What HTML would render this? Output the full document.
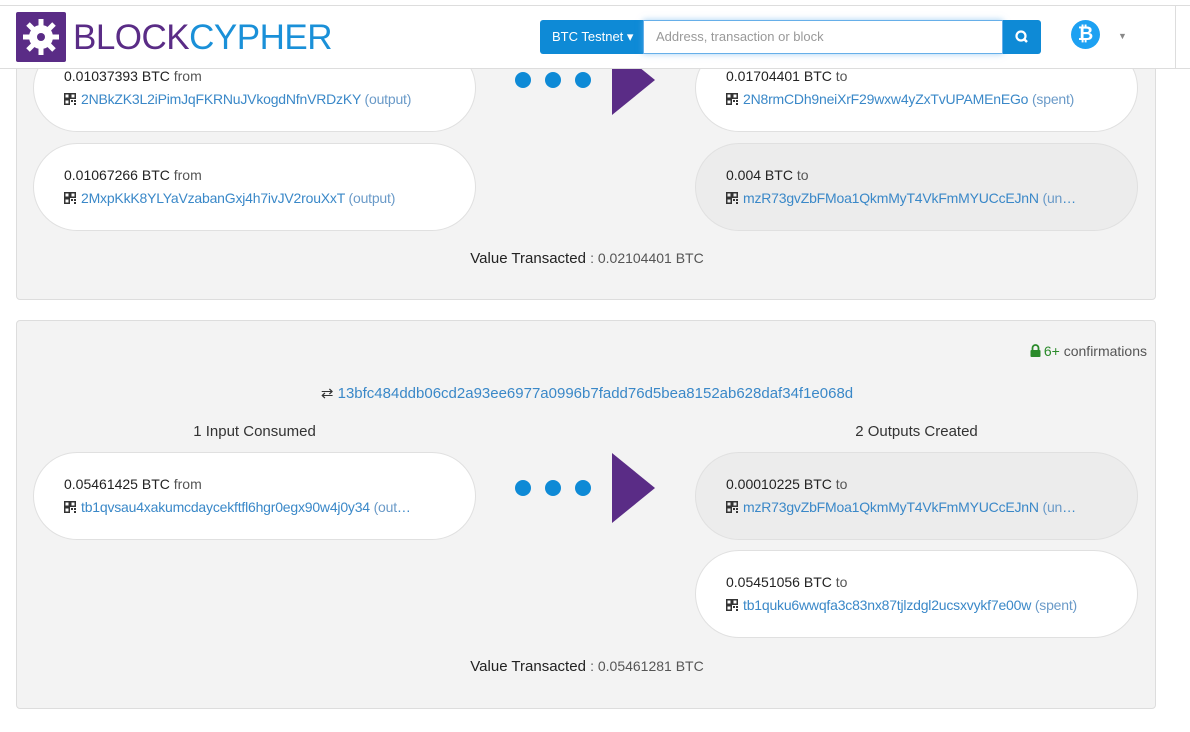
<!DOCTYPE html>
<html><head><style>
*{box-sizing:border-box;margin:0;padding:0}
body{width:1190px;height:732px;background:#fff;font-family:"Liberation Sans",sans-serif;color:#333;position:relative;overflow:hidden;font-size:14px}
.abs{position:absolute}
.panel{position:absolute;left:16px;width:1140px;background:#f3f3f3;border:1px solid #ddd;border-radius:4px}
.pill{position:absolute;width:443px;height:88px;border:1px solid #e0e0e0;border-radius:44px;background:#fff;padding:20px 0 0 30px;white-space:nowrap;overflow:hidden}
.pill.g{background:#ececec}
.pill .a{font-size:14px;color:#222;line-height:23px}
.pill .a span{color:#555}
.pill .l{font-size:14px;color:#3a88c8;line-height:23px;letter-spacing:-.2px;overflow:hidden;text-overflow:ellipsis;width:382px}
.pill .l span{color:#6a9ac8}
.qr{display:inline-block;width:12px;height:12px;vertical-align:-1px;margin-right:5px}
.dot{position:absolute;width:16px;height:16px;border-radius:50%;background:#0e8ad6}
.tri{position:absolute;width:0;height:0;border-top:35px solid transparent;border-bottom:35px solid transparent;border-left:43px solid #5a2c86}
.vt{position:absolute;left:0;width:1140px;text-align:center;font-size:15px;color:#222}
.vt span{color:#555;font-size:14px}
</style></head><body>
<svg width="0" height="0" style="position:absolute"><defs><g id="q"><rect x="0.75" y="0.75" width="4.5" height="4.5" fill="none" stroke="#333" stroke-width="1.5"/><rect x="6.75" y="0.75" width="4.5" height="4.5" fill="none" stroke="#333" stroke-width="1.5"/><rect x="0.75" y="6.75" width="4.5" height="4.5" fill="none" stroke="#333" stroke-width="1.5"/><rect x="7" y="7" width="2" height="2" fill="#333"/><rect x="10" y="10" width="2" height="2" fill="#333"/><rect x="10" y="7" width="2" height="2" fill="#333"/></g></defs></svg>

<div class="panel" style="top:30px;height:270px">
 <div class="pill" style="left:16px;top:13px;"><div class="a">0.01037393 BTC <span>from</span></div><div class="l"><svg class="qr"><use href="#q"/></svg>2NBkZK3L2iPimJqFKRNuJVkogdNfnVRDzKY <span>(output)</span></div></div>
 <div class="pill" style="left:16px;top:112px;"><div class="a">0.01067266 BTC <span>from</span></div><div class="l"><svg class="qr"><use href="#q"/></svg>2MxpKkK8YLYaVzabanGxj4h7ivJV2rouXxT <span>(output)</span></div></div>
 <div class="pill" style="left:678px;top:13px;"><div class="a">0.01704401 BTC <span>to</span></div><div class="l"><svg class="qr"><use href="#q"/></svg>2N8rmCDh9neiXrF29wxw4yZxTvUPAMEnEGo <span>(spent)</span></div></div>
 <div class="pill g" style="left:678px;top:112px;"><div class="a">0.004 BTC <span>to</span></div><div class="l" style="width:352px"><svg class="qr"><use href="#q"/></svg>mzR73gvZbFMoa1QkmMyT4VkFmMYUCcEJnN <span>(unspent)</span></div></div>
 <div class="dot" style="left:498px;top:41px"></div><div class="dot" style="left:528px;top:41px"></div><div class="dot" style="left:558px;top:41px"></div>
 <div class="tri" style="left:595px;top:14px"></div>
 <div class="vt" style="top:219px">Value Transacted <span>: 0.02104401 BTC</span></div>
</div>

<div class="abs" style="left:0;width:1190px;background:#fff;border-top:1px solid #ddd;border-bottom:1px solid #ddd;top:5px;height:64px"></div>
<div class="abs" style="left:0;top:0;width:1190px;height:5px;background:#fff"></div>
<svg class="abs" style="left:16px;top:12px" width="50" height="50" viewBox="0 0 50 50"><rect width="50" height="50" rx="2" fill="#5a2c86"/><g fill="#fff"><circle cx="25" cy="25" r="12"/><g stroke="#fff" stroke-width="5"><line x1="25" y1="7" x2="25" y2="43"/><line x1="7" y1="25" x2="43" y2="25"/><line x1="12" y1="12" x2="38" y2="38"/><line x1="38" y1="12" x2="12" y2="38"/></g></g><circle cx="25" cy="25" r="4" fill="#5a2c86"/></svg>
<div class="abs" style="left:73px;top:16px;font-size:35px;font-weight:normal;letter-spacing:-0.5px;line-height:44px"><span style="color:#5a2c86">BLOCK</span><span style="color:#1a90d8">CYPHER</span></div>
<div class="abs" style="left:540px;top:20px;width:103px;height:34px;background:#0e8ad6;border-radius:3px 0 0 3px;color:#fff;font-size:13px;line-height:34px;padding-left:12px">BTC Testnet ▾</div>
<div class="abs" style="left:643px;top:20px;width:360px;height:34px;border:1px solid #66afe9;box-shadow:0 0 6px rgba(102,175,233,.6);background:#fff;color:#999;font-size:13px;line-height:32px;padding-left:12px">Address, transaction or block</div>
<div class="abs" style="left:1003px;top:20px;width:38px;height:34px;background:#0e8ad6;border-radius:0 3px 3px 0"><svg width="38" height="34"><circle cx="18" cy="16" r="4.5" fill="none" stroke="#fff" stroke-width="2.2"/><line x1="21" y1="19" x2="24" y2="22" stroke="#fff" stroke-width="2.5"/></svg></div>
<div class="abs" style="left:1071px;top:20px;width:29px;height:29px;border-radius:50%;background:#1da1f2;color:#fff;font-weight:bold;font-size:19px;text-align:center;line-height:29px">₿</div>
<div class="abs" style="left:1118px;top:31px;color:#888;font-size:9px">▼</div>
<div class="abs" style="left:1175px;top:6px;width:1px;height:63px;background:#ddd"></div>

<div class="panel" style="top:320px;height:389px">
 <div class="abs" style="right:8px;top:22px;font-size:14px;color:#555"><svg width="11" height="13" style="vertical-align:-1px;margin-right:3px"><path d="M2.5 6V4a3 3 0 0 1 6 0v2" fill="none" stroke="#2a8a2a" stroke-width="1.8"/><rect x="0.5" y="6" width="10" height="7" rx="1" fill="#2a8a2a"/></svg><span style="color:#2a8a2a">6+</span> confirmations</div>
 <div class="abs" style="left:0;width:1140px;top:63px;text-align:center;font-size:15px;color:#3a88c8"><span style="color:#333">⇄</span> 13bfc484ddb06cd2a93ee6977a0996b7fadd76d5bea8152ab628daf34f1e068d</div>
 <div class="abs" style="left:16px;width:443px;top:102px;text-align:center;font-size:15px;color:#333">1 Input Consumed</div>
 <div class="abs" style="left:678px;width:443px;top:102px;text-align:center;font-size:15px;color:#333">2 Outputs Created</div>
 <div class="pill" style="left:16px;top:131px;"><div class="a">0.05461425 BTC <span>from</span></div><div class="l" style="width:352px"><svg class="qr"><use href="#q"/></svg>tb1qvsau4xakumcdaycekftfl6hgr0egx90w4j0y34 <span>(output)</span></div></div>
 <div class="pill g" style="left:678px;top:131px;"><div class="a">0.00010225 BTC <span>to</span></div><div class="l" style="width:352px"><svg class="qr"><use href="#q"/></svg>mzR73gvZbFMoa1QkmMyT4VkFmMYUCcEJnN <span>(unspent)</span></div></div>
 <div class="pill" style="left:678px;top:229px;"><div class="a">0.05451056 BTC <span>to</span></div><div class="l" style="width:352px"><svg class="qr"><use href="#q"/></svg>tb1quku6wwqfa3c83nx87tjlzdgl2ucsxvykf7e00w <span>(spent)</span></div></div>
 <div class="dot" style="left:498px;top:159px"></div><div class="dot" style="left:528px;top:159px"></div><div class="dot" style="left:558px;top:159px"></div>
 <div class="tri" style="left:595px;top:132px"></div>
 <div class="vt" style="top:337px">Value Transacted <span>: 0.05461281 BTC</span></div>
</div>
</body></html>
